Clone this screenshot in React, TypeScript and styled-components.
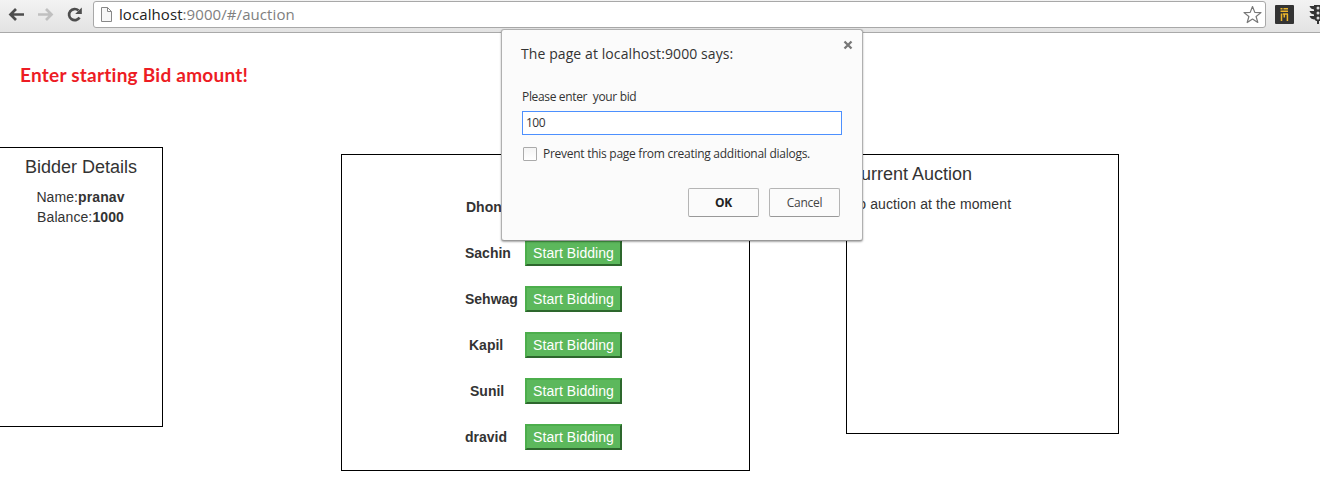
import React from 'react';
import styled, { createGlobalStyle } from 'styled-components';

const Global = createGlobalStyle`
  * { box-sizing: border-box; }
  body { margin: 0; background: #fff; overflow: hidden; }
`;

const Page = styled.div`
  position: relative;
  width: 1320px;
  height: 500px;
  overflow: hidden;
  background: #fff;
  color: #333;
  font: 14px/20px 'Liberation Sans', Arial, sans-serif;
`;

const Toolbar = styled.header`
  display: flex;
  align-items: flex-start;
  height: 33px;
  background: linear-gradient(#f3f3f3, #e3e3e3);
  border-bottom: 1px solid #a9a9a9;
`;

const NavIcons = styled.svg`
  flex: none;
  width: 93px;
  height: 30px;
`;

const AddressBar = styled.div`
  display: flex;
  align-items: center;
  flex: none;
  width: 1173px;
  height: 27px;
  margin-top: 1px;
  padding: 0 3px 0 6px;
  border: 1px solid #a8a8a8;
  border-radius: 3px;
  background: #fff;
`;

const Url = styled.div`
  flex: 1;
  padding: 0 0 2px 6px;
  color: #808080;
  font: 15px/22px 'Open Sans', sans-serif;
  letter-spacing: 0.08px;
  white-space: nowrap;
  b { font-weight: 400; color: #222; }
`;

const Extensions = styled.svg`
  flex: none;
  width: 54px;
  height: 30px;
`;

const Notice = styled.h1`
  margin: 0;
  height: 114px;
  padding: 31px 0 0 20px;
  color: #ed1c24;
  font: 700 19px/22px Lato, sans-serif;
  font-variant-ligatures: none;
  letter-spacing: 0.24px;
  white-space: nowrap;
`;

const Columns = styled.main`
  display: flex;
  align-items: flex-start;
`;

const Panel = styled.section<{ $width: number; $height: number; $top?: number; $left?: number; $flush?: boolean }>`
  flex: none;
  width: ${p => p.$width}px;
  height: ${p => p.$height}px;
  margin: ${p => p.$top ?? 0}px 0 0 ${p => p.$left ?? 0}px;
  border: 1px solid #000;
  ${p => p.$flush && 'border-left: 0;'}
`;

const PanelTitle = styled.h2`
  margin: 9px 0 10px;
  font-size: 18px;
  line-height: 20px;
  font-weight: 400;
  letter-spacing: 0;
`;

const Bidder = styled.div`
  text-align: center;
  letter-spacing: 0.1px;
  div { margin-right: 1px; }
`;

const Auction = styled.div`
  padding-left: 1px;
  letter-spacing: 0.12px;
  p { margin: 0; }
`;

const Players = styled.ul`
  list-style: none;
  margin: 0;
  padding: 39px 0 0 123px;
  display: grid;
  row-gap: 20px;
`;

const Player = styled.li`
  display: flex;
  align-items: center;
  height: 26px;
`;

const Name = styled.strong<{ $indent: number }>`
  width: 60px;
  padding-left: ${p => p.$indent}px;
`;

const BidButton = styled.button`
  width: 97px;
  height: 26px;
  padding: 0;
  border: 2px solid;
  border-color: #4cae4c #2d672d #2d672d #4cae4c;
  background: #5cb85c;
  color: #fff;
  font: 14px/20px 'Liberation Sans', Arial, sans-serif;
  letter-spacing: 0.05px;
  white-space: nowrap;
`;

const Dialog = styled.div`
  position: absolute;
  left: 501px;
  top: 29px;
  width: 362px;
  height: 212px;
  padding: 14px 20px 0;
  border: 1px solid #b0b0b0;
  border-bottom-color: #999;
  border-radius: 3px;
  background: #fbfbfb;
  box-shadow: 0 1px 2px rgba(0, 0, 0, 0.35);
  color: #333;
  font: 12px/16px 'Open Sans', sans-serif;
`;

const DialogHead = styled.div`
  display: flex;
  justify-content: space-between;
  height: 45px;
  margin-right: -11px;
`;

const DialogTitle = styled.div`
  margin-left: -1px;
  font-size: 14px;
  line-height: 20px;
  letter-spacing: 0.09px;
  white-space: nowrap;
`;

const CloseIcon = styled.svg`
  width: 10px;
  height: 10px;
  margin-top: -4px;
`;

const Prompt = styled.div`
  white-space: pre;
  letter-spacing: -0.34px;
`;

const Field = styled.div`
  width: 320px;
  height: 24px;
  margin-top: 6px;
  padding: 0 3px;
  border: 1px solid #4d90fe;
  background: #fff;
  line-height: 22px;
  letter-spacing: -0.5px;
`;

const Check = styled.div`
  display: flex;
  align-items: center;
  height: 16px;
  margin-top: 11px;
  letter-spacing: -0.27px;
  white-space: nowrap;
`;

const Box = styled.span`
  width: 14px;
  height: 14px;
  margin: 0 6px 0 1px;
  border: 1px solid #aaa;
  border-radius: 1px;
  background: linear-gradient(#f4f4f4, #fff);
`;

const Actions = styled.div`
  display: flex;
  justify-content: flex-end;
  gap: 10px;
  margin: 26px 2px 0 0;
`;

const Action = styled.button<{ $primary?: boolean }>`
  width: 71px;
  height: 29px;
  padding: 0;
  border: 1px solid #b5b5b5;
  border-bottom-color: #999;
  border-radius: 2px;
  background: #fbfbfb;
  color: ${p => (p.$primary ? '#222' : '#444')};
  font: ${p => (p.$primary ? 700 : 400)} 12px/16px 'Open Sans', sans-serif;
  letter-spacing: -0.25px;
`;

const players = [
  { name: 'Dhoni', indent: 1 },
  { name: 'Sachin', indent: 0 },
  { name: 'Sehwag', indent: 0 },
  { name: 'Kapil', indent: 4 },
  { name: 'Sunil', indent: 5 },
  { name: 'dravid', indent: 0 },
];

export default function App() {
  return (
    <>
      <Global />
      <Page>
        <Toolbar>
          <NavIcons viewBox="0 0 93 30" fill="none">
            <path d="M24 14.5H11M16 9l-5.5 5.5L16 20" stroke="#4d4d4d" strokeWidth="2.7" />
            <path d="M38 14.5h13M46 9l5.5 5.5L46 20" stroke="#c0c0c0" strokeWidth="2.7" />
            <path d="M79.5 17.5a5.6 5.6 0 1 1-1-7" stroke="#4d4d4d" strokeWidth="2.7" />
            <path d="M81.8 7.5v6.6h-6.6z" fill="#4d4d4d" />
          </NavIcons>
          <AddressBar>
            <svg width="13" height="16" viewBox="0 0 13 16" fill="#f7f7f7" stroke="#888">
              <path d="M1.5.5h6l4 4v10h-10zM7.5.5v4h4" />
            </svg>
            <Url><b>localhost</b>:9000/#/auction</Url>
            <svg width="20" height="20" viewBox="0 0 20 20" fill="#fff" stroke="#777" strokeWidth="1.2" strokeLinejoin="round">
              <path d="M10.5 1.5l2.3 5.9 6.2.2-4.9 3.9 1.7 6-5.3-3.4-5.3 3.4 1.7-6L2 7.6l6.2-.2z" />
            </svg>
          </AddressBar>
          <Extensions viewBox="1266 0 54 30">
            <rect x="1275" y="5" width="19" height="19" rx="1" fill="#333" />
            <path d="M1280.5 8.7h2M1283.5 8.7h4.500M1280.5 11.3h7.500M1281.5 13.5v7.500M1282.8 14h5.200M1284.3 14v3.500M1287.4 14v7" fill="none" stroke="#edb62b" strokeWidth="1.5" />
            <path d="M1314 5h6v16h-1v3h-2v-3h-1l-2-2zM1309.5 6h4.500v3.500q-3.500-.5-4.500-3.500M1309.5 11h4.500v3.500q-3.500-.5-4.500-3.500M1309.5 16h4.500v3.500q-3.500-.5-4.500-3.500" fill="#333" />
            <g fill="#ddd">
              <circle cx="1318" cy="8" r="1.5" />
              <circle cx="1318" cy="13" r="1.5" />
              <circle cx="1318" cy="18" r="1.5" />
            </g>
          </Extensions>
        </Toolbar>
        <Notice>Enter starting Bid amount!</Notice>
        <Columns>
          <Panel $width={163} $height={280} $flush>
            <Bidder>
              <PanelTitle>Bidder Details</PanelTitle>
              <div>Name:<b>pranav</b></div>
              <div>Balance:<b>1000</b></div>
            </Bidder>
          </Panel>
          <Panel $width={409} $height={317} $top={7} $left={178}>
            <Players>
              {players.map(p => (
                <Player key={p.name}>
                  <Name $indent={p.indent}>{p.name}</Name>
                  <BidButton>Start Bidding</BidButton>
                </Player>
              ))}
            </Players>
          </Panel>
          <Panel $width={273} $height={280} $top={7} $left={96}>
            <Auction>
              <PanelTitle>Current Auction</PanelTitle>
              <p>No auction at the moment</p>
            </Auction>
          </Panel>
        </Columns>
        <Dialog>
          <DialogHead>
            <DialogTitle>The page at localhost:9000 says:</DialogTitle>
            <CloseIcon viewBox="0 0 10 10" fill="none" stroke="#777" strokeWidth="2.3">
              <path d="M1.5 1.5l7 7M8.5 1.5l-7 7" />
            </CloseIcon>
          </DialogHead>
          <Prompt>{'Please enter  your bid'}</Prompt>
          <Field>100</Field>
          <Check><Box />Prevent this page from creating additional dialogs.</Check>
          <Actions>
            <Action $primary>OK</Action>
            <Action>Cancel</Action>
          </Actions>
        </Dialog>
      </Page>
    </>
  );
}
